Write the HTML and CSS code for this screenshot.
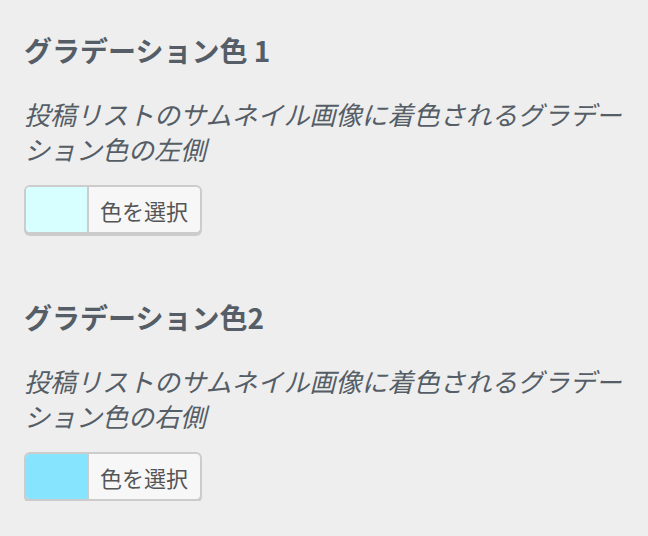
FILE: index.html
```html
<!DOCTYPE html>
<html lang="ja">
<head>
    <meta charset="UTF-8">
    <title>グラデーション色</title>
    <link rel="stylesheet" href="styles.css">
</head>
<body>
    <div class="panel">
        <div class="control">
            <span class="control-title">グラデーション色 1</span>
            <span class="description">投稿リストのサムネイル画像に着色されるグラデーション色の左側</span>
            <button type="button" class="color-result">
                <span class="swatch swatch-left"></span>
                <span class="color-label">色を選択</span>
            </button>
        </div>

        <div class="control">
            <span class="control-title">グラデーション色2</span>
            <span class="description">投稿リストのサムネイル画像に着色されるグラデーション色の右側</span>
            <button type="button" class="color-result">
                <span class="swatch swatch-right"></span>
                <span class="color-label">色を選択</span>
            </button>
        </div>
    </div>
</body>
</html>
```

FILE: styles.css
```css
body {
    margin: 0;
    background-color: #eeeeee;
    font-family: "Noto Sans CJK JP", "Noto Sans", sans-serif;
    color: #555d66;
}
.panel {
    padding: 30px 24px 0 24px;
}
.control {
    margin-bottom: 63px;
}
.control:last-child {
    margin-bottom: 0;
}
.control-title {
    display: block;
    font-size: 28px;
    font-weight: bold;
    line-height: 40px;
    margin-bottom: 24px;
}
.description {
    display: block;
    font-size: 26px;
    font-style: italic;
    line-height: 35px;
    padding-top: 2px;
    margin-bottom: 19px;
}
.color-result {
    display: flex;
    align-items: stretch;
    height: 49px;
    padding: 0;
    border: 2px solid #cccccc;
    border-radius: 6px;
    background: #f7f7f7;
    box-shadow: 0 2px 0 #cccccc;
    font-family: inherit;
    overflow: hidden;
    cursor: pointer;
}
.swatch {
    width: 61px;
    border-right: 2px solid #cccccc;
}
.swatch-left {
    background-color: #d7ffff;
}
.swatch-right {
    background-color: #86e4ff;
}
.color-label {
    display: flex;
    align-items: center;
    padding: 0 12px 0 11px;
    font-size: 22px;
    color: #555555;
}
```
